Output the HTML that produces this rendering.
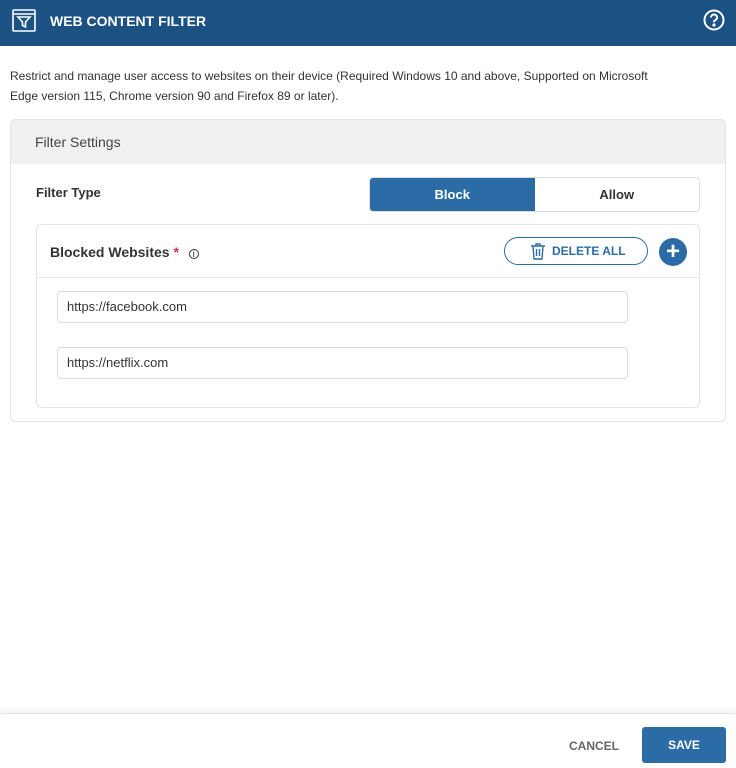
<!DOCTYPE html>
<html><head><style>
*{box-sizing:border-box;margin:0;padding:0}
body{width:736px;height:768px;background:#fff;font-family:"Liberation Sans",sans-serif;position:relative;overflow:hidden;color:#333}
.hdr{position:absolute;left:0;top:0;width:736px;height:46px;background:#1c5283}
.hdr .t{position:absolute;left:50px;top:13px;color:#fff;font-weight:bold;font-size:14px}
.desc{position:absolute;left:10px;top:66px;font-size:12px;line-height:20px;color:#333;width:726px;white-space:nowrap}
.card{position:absolute;left:10px;top:119px;width:716px;height:303px;border:1px solid #e3e3e3;border-radius:6px;overflow:hidden}
.card .h{height:44px;background:#f0f0f0;padding:14px 24px;font-size:14px;color:#444}
.ft{position:absolute;left:25px;top:65px;font-size:13px;font-weight:bold;color:#333}
.tog{position:absolute;left:358px;top:57px;width:331px;height:35px;border:1px solid #ddd;border-radius:4px;overflow:hidden;display:flex;font-size:13px;font-weight:bold}
.tog div{flex:1;text-align:center;line-height:33px}
.tog .on{background:#2b6ca6;color:#fff}
.inner{position:absolute;left:25px;top:104px;width:664px;height:184px;border:1px solid #e3e3e3;border-radius:6px}
.bw{position:absolute;left:13px;top:19px;font-size:14px;font-weight:bold;color:#333}
.line{position:absolute;left:0;top:52px;width:662px;border-top:1px solid #e6e6e6}
.del{position:absolute;left:467px;top:12px;width:144px;height:28px;border:1px solid #2b6ca6;border-radius:14px;color:#2b6ca6;font-size:12px;font-weight:bold;line-height:26px;padding-left:47px}
.plus{position:absolute;left:622px;top:13px;width:28px;height:28px;border-radius:50%;background:#2b6ca6;color:#fff;font-size:24px;text-align:center;line-height:27px;font-weight:bold}
.inp{position:absolute;left:20px;width:571px;height:32px;border:1px solid #ddd;border-radius:4px;font-size:13px;padding-left:9px;line-height:30px;color:#333}
.foot{position:absolute;left:0;top:713px;width:736px;height:55px;border-top:1px solid #e6e6e6;box-shadow:0 -4px 6px rgba(0,0,0,.05)}
.cancel{position:absolute;left:569px;top:25px;font-size:12px;font-weight:bold;color:#666}
.save{position:absolute;left:642px;top:13px;width:84px;height:36px;background:#2b6ca6;border-radius:3px;color:#fff;font-size:12px;font-weight:bold;text-align:center;line-height:36px}
</style></head><body>
<div class="hdr">
<svg style="position:absolute;left:12px;top:9px" width="24" height="24" viewBox="0 0 24 24" fill="none" stroke="#fff" stroke-width="1.6"><rect x="1" y="1" width="22" height="21" rx="1"/><line x1="1" y1="5" x2="23" y2="5"/><path d="M6 8h12l-4.5 5v5l-3-1.5v-3.5z"/></svg>
<div class="t">WEB CONTENT FILTER</div>
<svg style="position:absolute;left:703px;top:9px" width="22" height="22" viewBox="0 0 22 22" fill="none" stroke="#fff" stroke-width="2"><circle cx="11" cy="11" r="9.5"/><path d="M8 8.5a3 3 0 1 1 4 2.8c-.8.4-1 1-1 2"/><circle cx="11" cy="16" r=".6" fill="#fff"/></svg>
</div>
<div class="desc">Restrict and manage user access to websites on their device (Required Windows 10 and above, Supported on Microsoft<br>Edge version 115, Chrome version 90 and Firefox 89 or later).</div>
<div class="card">
<div class="h">Filter Settings</div>
<div class="ft">Filter Type</div>
<div class="tog"><div class="on">Block</div><div>Allow</div></div>
<div class="inner">
<div class="bw">Blocked Websites <span style="color:#d33">*</span> <span style="font-size:10px;font-weight:normal;border:1px solid #333;border-radius:50%;display:inline-block;width:10px;height:10px;line-height:9px;text-align:center;margin-left:6px">i</span></div>
<div class="del"><svg style="position:absolute;left:25px;top:5px" width="16" height="17" viewBox="0 0 16 17" fill="none" stroke="#2b6ca6" stroke-width="1.4"><path d="M1 3h14M6 3V1h4v2M3 3l1 13h8l1-13M6.5 6v7M9.5 6v7"/></svg>DELETE ALL</div>
<div class="plus">+</div>
<div class="line"></div>
<div class="inp" style="top:66px">https://facebook.com</div>
<div class="inp" style="top:122px">https://netflix.com</div>
</div>
</div>
<div class="foot"><div class="cancel">CANCEL</div><div class="save">SAVE</div></div>
</body></html>
